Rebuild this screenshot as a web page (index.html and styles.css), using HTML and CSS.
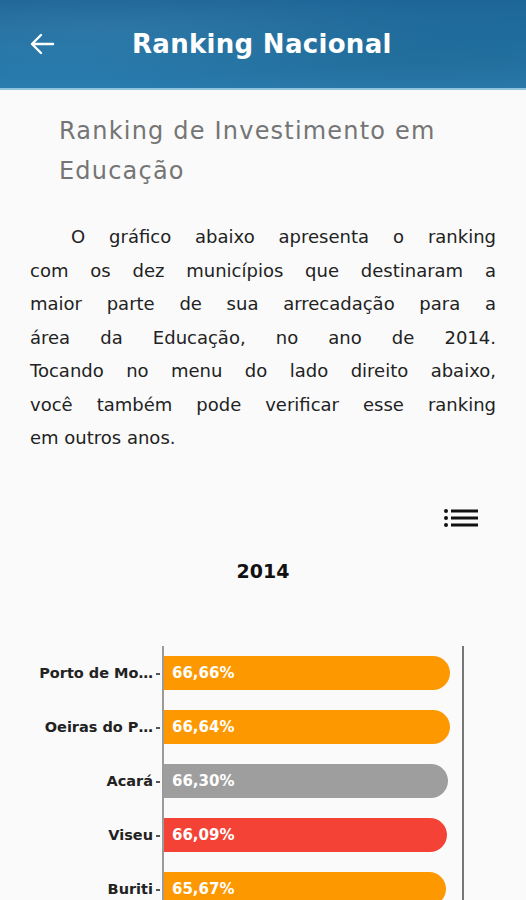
FILE: index.html
```html
<!DOCTYPE html>
<html lang="pt-BR">
<head>
  <meta charset="UTF-8">
  <meta name="viewport" content="width=device-width, initial-scale=1.0">
  <link rel="stylesheet" href="styles.css">
  <title>Ranking Nacional</title>
</head>
<body>

<header class="appbar">
  <button class="back" aria-label="Voltar">
    <svg width="26" height="26" viewBox="0 0 26 26" fill="none" stroke="#fff" stroke-width="2.4" stroke-linecap="round" stroke-linejoin="round"><path d="M24 13H3M12 4l-9 9 9 9"/></svg>
  </button>
  <h1 class="appbar-title">Ranking Nacional</h1>
</header>

<main class="content">
  <h2 class="section-title">Ranking de Investimento em<br>Educação</h2>

  <p class="intro">
    <span class="line first">O gráfico abaixo apresenta o ranking</span>
    <span class="line">com os dez municípios que destinaram a</span>
    <span class="line">maior parte de sua arrecadação para a</span>
    <span class="line">área da Educação, no ano de 2014.</span>
    <span class="line">Tocando no menu do lado direito abaixo,</span>
    <span class="line">você também pode verificar esse ranking</span>
    <span class="line last">em outros anos.</span>
  </p>

  <div class="toolbar">
    <button class="menu" aria-label="Anos">
      <svg width="34" height="20" viewBox="0 0 34 20">
        <circle cx="2" cy="3" r="2" fill="#111"/>
        <circle cx="2" cy="10" r="2" fill="#111"/>
        <circle cx="2" cy="17" r="2" fill="#111"/>
        <rect x="7" y="1.5" width="27" height="3" fill="#111"/>
        <rect x="7" y="8.5" width="27" height="3" fill="#111"/>
        <rect x="7" y="15.5" width="27" height="3" fill="#111"/>
      </svg>
    </button>
  </div>

  <h3 class="chart-year">2014</h3>

  <div class="chart" id="chart"></div>
</main>

<script>
  const data = [
    { name: 'Porto de Moz', value: 66.66, color: 'orange' },
    { name: 'Oeiras do Pará', value: 66.64, color: 'orange' },
    { name: 'Acará', value: 66.30, color: 'gray' },
    { name: 'Viseu', value: 66.09, color: 'red' },
    { name: 'Buriti', value: 65.67, color: 'orange' }
  ];
  const maxValue = 69.5;
  const chart = document.getElementById('chart');

  function shortName(name) {
    return name.length > 11 ? name.slice(0, 11) + '…' : name;
  }

  data.forEach(item => {
    const label = document.createElement('div');
    label.className = 'bar-label';
    label.textContent = shortName(item.name);

    const track = document.createElement('div');
    track.className = 'bar-track';

    const bar = document.createElement('div');
    bar.className = 'bar ' + item.color;
    bar.style.width = (item.value / maxValue * 100) + '%';
    bar.textContent = item.value.toFixed(2).replace('.', ',') + '%';

    track.appendChild(bar);
    chart.appendChild(label);
    chart.appendChild(track);
  });
</script>

</body>
</html>
```
FILE: styles.css
```css
html, body {
  overflow: hidden;
}

body {
  margin: 0;
  font-family: 'DejaVu Sans', 'Noto Sans', sans-serif;
  background-color: #fafafa;
  color: #222;
}

button {
  border: none;
  background: none;
  padding: 0;
  cursor: pointer;
}

.appbar {
  display: flex;
  align-items: center;
  height: 88px;
  padding-left: 29px;
  background:
    radial-gradient(ellipse at 20% 30%, rgba(255, 255, 255, 0.06), transparent 60%),
    radial-gradient(ellipse at 80% 70%, rgba(0, 0, 0, 0.08), transparent 60%),
    linear-gradient(180deg, #1c6596 0%, #2274a6 55%, #2a7cae 100%);
  border-bottom: 2px solid #8fc4df;
}

.back {
  display: flex;
  width: 26px;
  height: 26px;
}

.appbar-title {
  margin: 0 0 0 77px;
  font-size: 26px;
  font-weight: 700;
  letter-spacing: 0.3px;
  color: #fff;
}

.section-title {
  margin: 0;
  padding: 21px 10px 0 59px;
  font-size: 24px;
  font-weight: 400;
  letter-spacing: 1.2px;
  line-height: 40px;
  color: #757575;
}

.intro {
  margin: 29px 30px 0 30px;
  font-size: 18px;
  line-height: 33.5px;
  color: #222;
}

.line {
  display: block;
  text-align: justify;
  text-align-last: justify;
  white-space: nowrap;
}

.line.first {
  text-indent: 41px;
}

.line.last {
  text-align-last: left;
}

.toolbar {
  display: flex;
  justify-content: flex-end;
  padding: 53px 48px 0 0;
}

.menu {
  display: flex;
}

.chart-year {
  margin: 29px 0 0 0;
  text-align: center;
  font-size: 19px;
  font-weight: 700;
  line-height: 28px;
  color: #111;
}

.chart {
  display: grid;
  grid-template-columns: 162px 302px;
  grid-auto-rows: 54px;
  margin-top: 61px;
}

.bar-label {
  position: relative;
  display: flex;
  align-items: center;
  justify-content: flex-end;
  padding: 10px 9px 0 0;
  height: 34px;
  font-size: 14.5px;
  font-weight: 700;
  color: #222;
  white-space: nowrap;
}

.bar-label::after {
  content: '';
  position: absolute;
  right: 2px;
  top: 27px;
  width: 4px;
  height: 2px;
  background-color: #555;
}

.bar-track {
  padding-top: 10px;
  border-left: 2px solid #9a9a9a;
  border-right: 2px solid #777;
}

.bar {
  display: flex;
  align-items: center;
  height: 34px;
  padding-left: 8px;
  box-sizing: border-box;
  border-radius: 0 17px 17px 0;
  font-size: 15px;
  font-weight: 700;
  color: #fff;
}

.bar.orange {
  background-color: #fd9800;
}

.bar.gray {
  background-color: #9e9e9e;
}

.bar.red {
  background-color: #f44336;
}
```
